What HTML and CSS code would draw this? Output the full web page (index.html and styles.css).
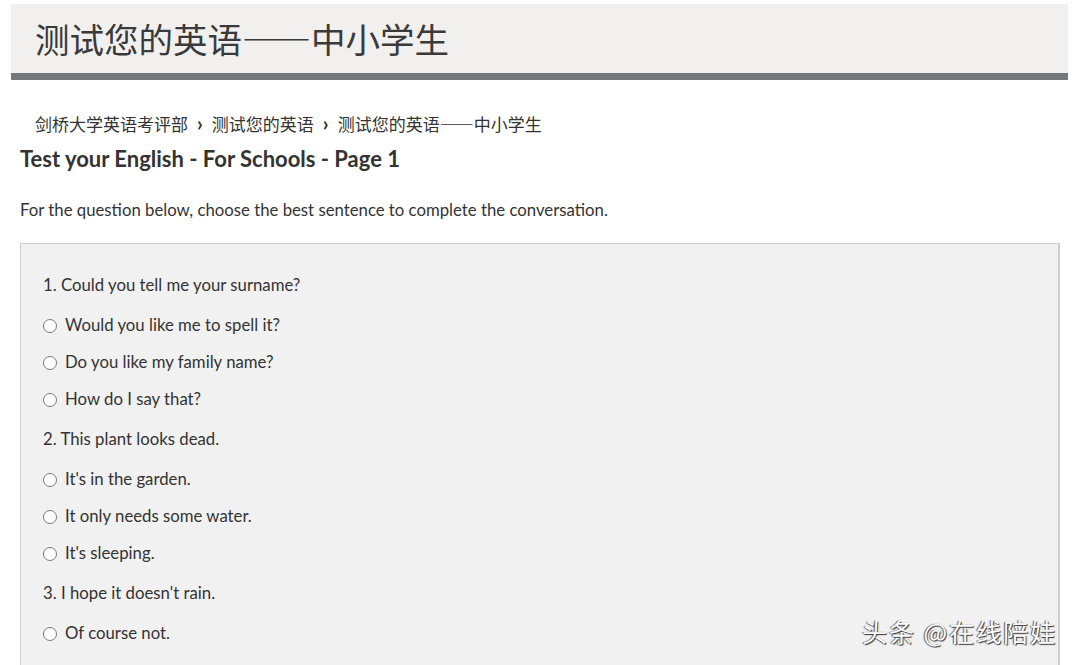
FILE: index.html
```html
<!DOCTYPE html>
<html lang="zh">
<head>
    <meta charset="UTF-8">
    <title>测试您的英语——中小学生</title>
    <link rel="stylesheet" href="styles.css">
</head>
<body>
    <div class="page-header">
        <h1 class="page-title">测试您的英语——中小学生</h1>
    </div>

    <div class="breadcrumb">
        剑桥大学英语考评部<span class="crumb-sep">›</span>测试您的英语<span class="crumb-sep">›</span>测试您的英语——中小学生
    </div>

    <h2 class="test-heading">Test your English - For Schools - Page 1</h2>

    <p class="intro">For the question below, choose the best sentence to complete the conversation.</p>

    <div class="quiz-box">
        <div class="question">1. Could you tell me your surname?</div>
        <div class="option"><span class="radio"></span>Would you like me to spell it?</div>
        <div class="option"><span class="radio"></span>Do you like my family name?</div>
        <div class="option"><span class="radio"></span>How do I say that?</div>

        <div class="question">2. This plant looks dead.</div>
        <div class="option"><span class="radio"></span>It's in the garden.</div>
        <div class="option"><span class="radio"></span>It only needs some water.</div>
        <div class="option"><span class="radio"></span>It's sleeping.</div>

        <div class="question">3. I hope it doesn't rain.</div>
        <div class="option"><span class="radio"></span>Of course not.</div>
    </div>

    <div class="watermark">头条 @在线陪娃</div>
</body>
</html>
```

FILE: styles.css
```css
html, body {
    height: 100%;
    overflow: hidden;
}

body {
    margin: 0;
    background-color: white;
    color: #333;
    font-family: Lato, "Noto Sans CJK SC", sans-serif;
}

.page-header {
    margin: 4px 12px 0 11px;
    height: 69px;
    padding-left: 24px;
    background-color: #f1f0ef;
    border-bottom: 7px solid #75787b;
    display: flex;
    align-items: center;
}

.page-title {
    margin: 0;
    font-family: "Noto Sans CJK SC", sans-serif;
    font-size: 34.5px;
    font-weight: 400;
    color: #3a3a3a;
    line-height: 1;
}

.breadcrumb {
    margin-top: 31px;
    padding-left: 35px;
    font-family: "Noto Sans CJK SC", sans-serif;
    font-size: 17px;
    line-height: 24px;
    color: #333;
}

.crumb-sep {
    display: inline-block;
    margin: 0 9px;
    font-family: Lato, sans-serif;
    font-weight: 700;
    font-size: 20px;
}

.test-heading {
    margin: 9px 0 0 20px;
    font-size: 22px;
    font-weight: 700;
    line-height: 28px;
    color: #333;
}

.intro {
    margin: 25px 0 0 20px;
    font-size: 16.75px;
    line-height: 24px;
}

.quiz-box {
    margin: 21px 0 0 20px;
    width: 1040px;
    height: 600px;
    box-sizing: border-box;
    padding: 26px 22px;
    background-color: #f1f1f1;
    border: 1px solid #cfcfcf;
    border-right-width: 2px;
    display: flex;
    flex-direction: column;
    gap: 13px;
    font-size: 16.75px;
    line-height: 24px;
}

.question {
    margin: 3px 0;
}

.option {
    display: flex;
    align-items: center;
}

.radio {
    width: 12px;
    height: 12px;
    margin: 2px 8px 0 0;
    border: 1px solid #777;
    border-radius: 50%;
    background-color: white;
}

.watermark {
    position: absolute;
    left: 862px;
    top: 613px;
    font-family: "Noto Sans CJK SC", sans-serif;
    font-size: 25px;
    letter-spacing: 2px;
    color: white;
    text-shadow: 1px 1px 1px #333, -1px 0 1px #555;
    white-space: nowrap;
}
```
